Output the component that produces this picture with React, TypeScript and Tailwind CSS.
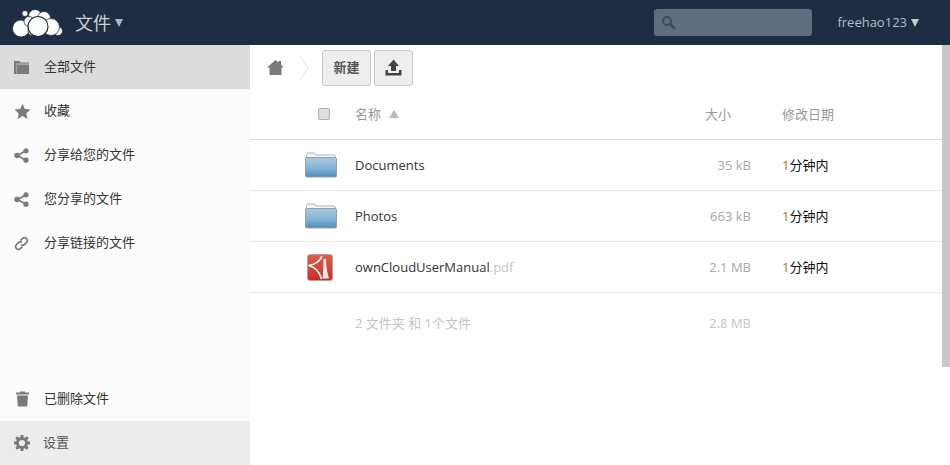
import React from "react";

const font = { fontFamily: '"Open Sans","Noto Sans CJK SC",sans-serif' };

function Logo() {
  return (
    <svg width="51" height="28" viewBox="0 0 51 28" className="shrink-0">
      <g fill="#fff" stroke="#1d2d44" strokeWidth="0.8">
        <circle cx="23" cy="7" r="6.500" />
        <circle cx="32" cy="9" r="6.500" />
        <circle cx="13" cy="4.500" r="3" />
        <circle cx="46" cy="22" r="4.500" />
        <circle cx="9" cy="19.500" r="8.500" />
        <circle cx="39" cy="18" r="8.500" />
        <circle cx="17" cy="12.500" r="5" />
        <circle cx="20" cy="22.500" r="4" />
        <circle cx="26" cy="17.500" r="10" strokeWidth="1.200" />
      </g>
    </svg>
  );
}

function Caret({ fill }: { fill: string }) {
  return (
    <svg width="8" height="8" viewBox="0 0 8 8" className="shrink-0">
      <path d="M0 0h8L4 8z" fill={fill} />
    </svg>
  );
}

function FolderIcon() {
  return (
    <svg width="15" height="14" viewBox="0 0 15 14">
      <path d="M0 1h6v1.500h9v1H2.500V14H0z" fill="#7a7a7a" />
      <path d="M2.500 3.500H15V14H2.500z" fill="#7a7a7a" opacity="0.55" />
      <path d="M3 5h12v9H3z" fill="#7a7a7a" />
    </svg>
  );
}
function StarIcon() {
  return (
    <svg width="17" height="17" viewBox="0 0 17 17">
      <path d="M8.500.8l2.300 5.200 5.700.6-4.300 3.800 1.300 5.600-5-2.900-5 2.900 1.300-5.600L.5 6.600l5.700-.6z" fill="#7a7a7a" />
    </svg>
  );
}
function ShareIcon() {
  return (
    <svg width="15" height="15" viewBox="0 0 15 15">
      <path d="M11.500 3L3.500 7.500l8 4.500" fill="none" stroke="#7a7a7a" strokeWidth="1.800" />
      <circle cx="12" cy="2.800" r="2.600" fill="#7a7a7a" />
      <circle cx="3" cy="7.500" r="2.700" fill="#7a7a7a" />
      <circle cx="12" cy="12.200" r="2.600" fill="#7a7a7a" />
    </svg>
  );
}
function LinkIcon() {
  return (
    <svg width="15" height="15" viewBox="0 0 15 15" fill="none" stroke="#7a7a7a" strokeWidth="1.700">
      <path d="M6.600 4.400l2-2a2.600 2.600 0 0 1 3.800 0l.2.2a2.600 2.600 0 0 1 0 3.800l-2 2a2.600 2.600 0 0 1-3.400.3" />
      <path d="M8.400 10.600l-2 2a2.600 2.600 0 0 1-3.800 0l-.2-.2a2.600 2.600 0 0 1 0-3.800l2-2a2.600 2.600 0 0 1 3.400-.3" />
    </svg>
  );
}
function TrashIcon() {
  return (
    <svg width="13" height="16" viewBox="0 0 13 16">
      <path d="M0 1.500h4V.5h5v1h4v2H0z" fill="#7a7a7a" />
      <path d="M1 4.500h11l-.8 11H1.800z" fill="#7a7a7a" />
    </svg>
  );
}
function GearIcon() {
  return (
    <svg width="16" height="16" viewBox="0 0 16 16">
      <circle cx="8" cy="8" r="4.600" fill="none" stroke="#7a7a7a" strokeWidth="3" />
      <g stroke="#7a7a7a" strokeWidth="3">
        <path d="M8 0v3M8 13v3M0 8h3M13 8h3M2.300 2.300l2.100 2.100M11.600 11.600l2.100 2.100M2.300 13.700l2.100-2.100M11.600 4.400l2.100-2.100" />
      </g>
    </svg>
  );
}

function SideItem({ icon, label, active }: { icon: React.ReactNode; label: string; active?: boolean }) {
  return (
    <div className={`h-11 flex items-center text-[13px] text-[#333] ${active ? "bg-[#dcdcdc]" : ""}`}>
      <div className="w-11 pl-[14px] flex items-center shrink-0">{icon}</div>
      <span>{label}</span>
    </div>
  );
}

function FolderThumb() {
  return (
    <svg width="32" height="26" viewBox="0 0 32 26">
      <defs>
        <linearGradient id="fg" x1="0" y1="0" x2="0" y2="1">
          <stop offset="0" stopColor="#a9cbe3" />
          <stop offset="0.6" stopColor="#7fb0d3" />
          <stop offset="1" stopColor="#4f8cba" />
        </linearGradient>
      </defs>
      <path d="M1.500 6V2.500L2.500 1h7l1.500 2h18.500L30.500 4v2" fill="#f6f6fa" stroke="#b4b4b8" strokeWidth="1" />
      <rect x="0.500" y="5.500" width="31" height="19.500" rx="1.500" fill="url(#fg)" stroke="#8f9fae" strokeWidth="1" />
    </svg>
  );
}
function PdfThumb() {
  return (
    <svg width="26" height="27" viewBox="0 0 26 27">
      <defs>
        <linearGradient id="pg" x1="0" y1="0" x2="0" y2="1">
          <stop offset="0" stopColor="#e0604e" />
          <stop offset="1" stopColor="#c22f2c" />
        </linearGradient>
      </defs>
      <rect x="0.500" y="0.500" width="25" height="26" rx="2.500" fill="url(#pg)" stroke="#b9a0a0" />
      <path d="M15 2C13 7 8 10.500 1.500 11.500 8 13 12.500 18 14.500 25" fill="none" stroke="#fff" strokeWidth="1.600" />
      <path d="M16.500 5h2.500c0 6 1 13 3 19.500h-6.500c.8-6 1-13 1-19.500z" fill="#f8e8e2" />
    </svg>
  );
}

function FileRow({ thumb, name, ext, size }: { thumb: React.ReactNode; name: string; ext?: string; size: string }) {
  return (
    <div className="h-[51px] flex items-center border-b border-[#eaeaea] text-[13px]">
      <div className="w-[105px] pl-[55px] flex shrink-0">{thumb}</div>
      <div className="flex-1 text-[#333] pt-[2px]">
        {name}
        {ext && <span className="text-[#c4c4c4]">{ext}</span>}
      </div>
      <div className="w-[100px] text-right text-[#a8a8a8] pt-[2px]">{size}</div>
      <div className="w-[199px] pl-[31px] text-[#111] pt-[2px]">
        <span className="text-[#a8742c]">1</span>分钟内
      </div>
    </div>
  );
}

export default function App() {
  return (
    <div className="w-[950px] h-[465px] overflow-hidden flex flex-col bg-white" style={font}>
      <header className="h-[45px] shrink-0 bg-[#1d2d44] flex items-center">
        <div className="ml-[12px] w-[63px] flex"><Logo /></div>
        <span className="text-[18px] text-[#c9ced6] leading-none">文件</span>
        <div className="ml-[4px]"><Caret fill="#aab2bd" /></div>
        <div className="ml-auto w-[158px] h-[27px] rounded-[3px] bg-[#5f6d7e] flex items-center pl-[7px]">
          <svg width="15" height="15" viewBox="0 0 15 15" fill="none" stroke="#3f4c5e" strokeWidth="2">
            <circle cx="6" cy="6" r="4" />
            <path d="M9 9l5 5" strokeWidth="2.600" />
          </svg>
        </div>
        <div className="ml-[25px] mr-[31px] text-[13px] text-[#b4bcc6] flex items-center gap-[4px]">
          <span>freehao123</span>
          <Caret fill="#c4cad2" />
        </div>
      </header>
      <div className="flex-1 flex min-h-0">
        <aside className="w-[250px] shrink-0 bg-[#fcfcfc] flex flex-col">
          <SideItem active icon={<FolderIcon />} label="全部文件" />
          <SideItem icon={<StarIcon />} label="收藏" />
          <SideItem icon={<ShareIcon />} label="分享给您的文件" />
          <SideItem icon={<ShareIcon />} label="您分享的文件" />
          <SideItem icon={<LinkIcon />} label="分享链接的文件" />
          <div className="mt-auto">
            <SideItem icon={<div className="ml-[2px] flex"><TrashIcon /></div>} label="已删除文件" />
          </div>
          <div className="h-11 bg-[#ececec] flex items-center text-[13px] text-[#555]">
            <div className="w-[43px] pl-[14px] flex shrink-0"><GearIcon /></div>
            <span>设置</span>
          </div>
        </aside>
        <main className="flex-1 relative min-w-0">
          <div className="h-[44px] flex items-center pl-[17px] pt-[1px]">
            <svg width="17" height="15" viewBox="0 0 17 15">
              <path d="M8.500 0l3 2.600V1h2.500v3.800L17 7.500h-2.500V15h-12V7.500H0z" fill="#7a7a7a" />
            </svg>
            <svg width="12" height="28" viewBox="0 0 12 28" className="ml-[15px]" fill="none" stroke="#e6e6ee">
              <path d="M1 1l8 13-8 13" />
            </svg>
            <button className="ml-[11px] w-[49px] h-[36px] rounded-[3px] border border-[#c8c8c8] bg-[#eeeeee] text-[13px] font-semibold text-[#555]">新建</button>
            <button className="ml-[3px] w-[39px] h-[36px] rounded-[3px] border border-[#c8c8c8] bg-[#eeeeee] flex items-center justify-center">
              <svg width="17" height="17" viewBox="0 0 17 17" fill="#444">
                <path d="M8.500 0.500L14 7h-3v5H6V7H3z" />
                <path d="M0.500 11h2.500v3h11v-3h2.500v5.500H0.500z" />
              </svg>
            </button>
          </div>
          <div className="h-[51px] flex items-center border-b border-[#dddddd] text-[13px] text-[#999]">
            <div className="w-[105px] pl-[68px] shrink-0">
              <div className="w-[12px] h-[12px] rounded-[2px] border border-[#b0b0b0] bg-[#dcdce4]" />
            </div>
            <div className="flex-1 flex items-center gap-[8px] pt-[1px]">
              <span>名称</span>
              <span className="text-[10px] text-[#b8b8b8]">▲</span>
            </div>
            <div className="w-[100px] pl-[54px] pt-[1px]">大小</div>
            <div className="w-[199px] pl-[31px] pt-[1px]">修改日期</div>
          </div>
          <FileRow thumb={<FolderThumb />} name="Documents" size="35 kB" />
          <FileRow thumb={<FolderThumb />} name="Photos" size="663 kB" />
          <FileRow thumb={<div className="ml-[2px]"><PdfThumb /></div>} name="ownCloudUserManual" ext=".pdf" size="2.1 MB" />
          <div className="h-[61px] flex items-center text-[13px] text-[#c4c4c4]">
            <div className="w-[105px] shrink-0" />
            <div className="flex-1">2 文件夹 和 1个文件</div>
            <div className="w-[100px] text-right">2.8 MB</div>
            <div className="w-[199px]" />
          </div>
          <div className="absolute right-0 top-0 w-[8px] h-[322px] bg-[#c8c8c8]" />
        </main>
      </div>
    </div>
  );
}
